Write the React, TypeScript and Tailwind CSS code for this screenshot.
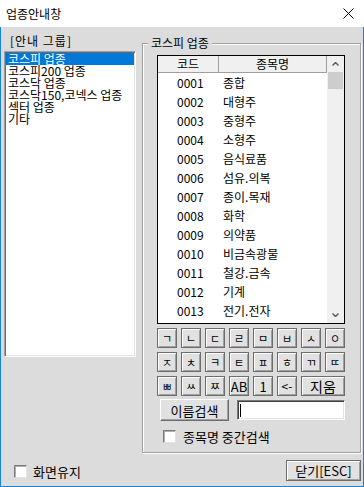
import React from 'react';

const GROUPS = ['코스피 업종', '코스피200 업종', '코스닥 업종', '코스닥150,코넥스 업종', '섹터 업종', '기타'];

const SECTORS: [string, string][] = [
  ['0001', '종합'],
  ['0002', '대형주'],
  ['0003', '중형주'],
  ['0004', '소형주'],
  ['0005', '음식료품'],
  ['0006', '섬유.의복'],
  ['0007', '종이.목재'],
  ['0008', '화학'],
  ['0009', '의약품'],
  ['0010', '비금속광물'],
  ['0011', '철강.금속'],
  ['0012', '기계'],
  ['0013', '전기.전자'],
];

const KEYS_1 = ['ㄱ', 'ㄴ', 'ㄷ', 'ㄹ', 'ㅁ', 'ㅂ', 'ㅅ', 'ㅇ'];
const KEYS_2 = ['ㅈ', 'ㅊ', 'ㅋ', 'ㅌ', 'ㅍ', 'ㅎ', 'ㄲ', 'ㄸ'];
const KEYS_3 = ['ㅃ', 'ㅆ', 'ㅉ'];

const keyBtn =
  'h-[20px] border border-[#6d6d6d] bg-[#e1e1e1] shadow-[inset_1px_1px_0_#fff,inset_-1px_-1px_0_#a0a0a0] flex items-center justify-center leading-none';

const Checkbox: React.FC = () => (
  <span className="w-[13px] h-[13px] bg-white border border-t-[#7a7a7a] border-l-[#7a7a7a] border-b-[#e3e3e3] border-r-[#e3e3e3] shadow-[inset_1px_1px_0_#b0b0b0]" />
);

const Chevron: React.FC<{ down?: boolean }> = ({ down }) => (
  <svg width="7" height="4" viewBox="0 0 7 4">
    <polyline
      points={down ? '0.5,0.5 3.5,3.5 6.5,0.5' : '0.5,3.5 3.5,0.5 6.5,3.5'}
      fill="none"
      stroke="#606060"
      strokeWidth="1.5"
    />
  </svg>
);

const App: React.FC = () => {
  return (
    <div className="w-[364px] h-[487px] flex flex-col bg-white text-black font-[Noto_Sans_CJK_KR,sans-serif] text-[12px]">
      {/* title bar */}
      <div className="h-[27px] flex items-center justify-between pl-[6px] pr-[10px]">
        <span className="text-[12px] leading-none">업종안내창</span>
        <svg width="11" height="11" viewBox="0 0 11 11">
          <path d="M0.5 0.5 L10.5 10.5 M10.5 0.5 L0.5 10.5" stroke="#000" strokeWidth="1" />
        </svg>
      </div>

      <div className="flex-1 flex flex-col bg-[#dcdcdc] border-x border-b border-[#1883d7]">
        <div className="flex">
          {/* left: group list */}
          <div className="ml-[3px] w-[132px] pt-[8px]">
            <div className="leading-[12px] pl-[6px] tracking-[1px]">[안내 그룹]</div>
            <div className="mt-[4px] h-[306px] bg-white border border-t-[#a0a0a0] border-l-[#a0a0a0] border-b-white border-r-white shadow-[inset_1px_1px_0_#696969,inset_-1px_-1px_0_#e3e3e3] p-[1px]">
              {GROUPS.map((g, i) => (
                <div
                  key={g}
                  className={`h-[12px] leading-[12px] pl-[2px] whitespace-nowrap ${i === 0 ? 'bg-[#0078d7] text-white' : ''}`}
                >
                  {g}
                </div>
              ))}
            </div>
          </div>

          {/* right: sector group box */}
          <div className="relative ml-[6px] mt-[16px] w-[219px] h-[410px] border border-[#a0a0a0] shadow-[inset_1px_1px_0_#fff,1px_1px_0_#fff] pl-[14px] pt-[11px]">
            <span className="absolute top-[-7px] left-[5px] px-[3px] bg-[#dcdcdc] leading-[12px]">코스피 업종</span>

            {/* table */}
            <div className="w-[188px] h-[269px] border border-black bg-white flex">
              <div className="w-[169px] flex flex-col">
                <div className="h-[17px] flex bg-[#f0f0f0] border-b border-r border-[#a0a0a0]">
                  <div className="w-[61px] border-r border-[#a0a0a0] flex items-center justify-center leading-none">코드</div>
                  <div className="flex-1 flex items-center justify-center leading-none">종목명</div>
                </div>
                {SECTORS.map(([code, name]) => (
                  <div key={code} className="h-[19px] flex items-center leading-none">
                    <div className="w-[61px] pl-[19px]">{code}</div>
                    <div className="pl-[4px]">{name}</div>
                  </div>
                ))}
              </div>
              {/* scrollbar */}
              <div className="w-[17px] bg-[#f0f0f0] flex flex-col">
                <div className="h-[16px] flex items-center justify-center">
                  <Chevron />
                </div>
                <div className="mx-[1px] h-[17px] bg-[#cdcdcd]" />
                <div className="flex-1" />
                <div className="h-[17px] flex items-center justify-center">
                  <Chevron down />
                </div>
              </div>
            </div>

            {/* keypad */}
            <div className="mt-[4px] w-[188px] grid grid-cols-8 gap-[4px]">
              {KEYS_1.map((k) => (
                <div key={k} className={`${keyBtn} text-[11px]`}>{k}</div>
              ))}
              {KEYS_2.map((k) => (
                <div key={k} className={`${keyBtn} text-[11px]`}>{k}</div>
              ))}
              {KEYS_3.map((k) => (
                <div key={k} className={`${keyBtn} text-[11px]`}>{k}</div>
              ))}
              <div className={`${keyBtn} text-[13px]`}>AB</div>
              <div className={`${keyBtn} text-[13px]`}>1</div>
              <div className={`${keyBtn} text-[12px]`}>&lt;-</div>
              <div className={`${keyBtn} col-span-2 text-[14px]`}>지움</div>
            </div>

            {/* name search */}
            <div className="mt-[3px] pl-[3px] flex items-center gap-[8px]">
              <div className="w-[69px] h-[22px] bg-[#e1e1e1] border border-t-white border-l-white border-b-[#6d6d6d] border-r-[#6d6d6d] shadow-[inset_-1px_-1px_0_#a0a0a0] flex items-center justify-center text-[13px] leading-none">
                이름검색
              </div>
              <div className="w-[108px] h-[20px] bg-white border border-t-[#7a7a7a] border-l-[#7a7a7a] border-b-white border-r-white shadow-[inset_1px_1px_0_#404040,inset_-1px_-1px_0_#e3e3e3] flex items-center pl-[2px]">
                <span className="w-[1px] h-[13px] bg-black" />
              </div>
            </div>

            {/* mid search */}
            <div className="mt-[9px] pl-[6px] flex items-center gap-[7px]">
              <Checkbox />
              <span className="text-[13px] leading-none">종목명 중간검색</span>
            </div>
          </div>
        </div>

        {/* bottom row */}
        <div className="flex items-center justify-between pl-[13px] pr-[2px] pt-[7px]">
          <div className="flex items-center gap-[6px] mt-[2px]">
            <Checkbox />
            <span className="text-[13px] leading-none">화면유지</span>
          </div>
          <div className="w-[75px] h-[21px] bg-[#e1e1e1] border border-[#6d6d6d] shadow-[inset_1px_1px_0_#fff,inset_-1px_-1px_0_#a0a0a0] flex items-center justify-center text-[13px] leading-none">
            닫기[ESC]
          </div>
        </div>
      </div>
    </div>
  );
};

export default App;
